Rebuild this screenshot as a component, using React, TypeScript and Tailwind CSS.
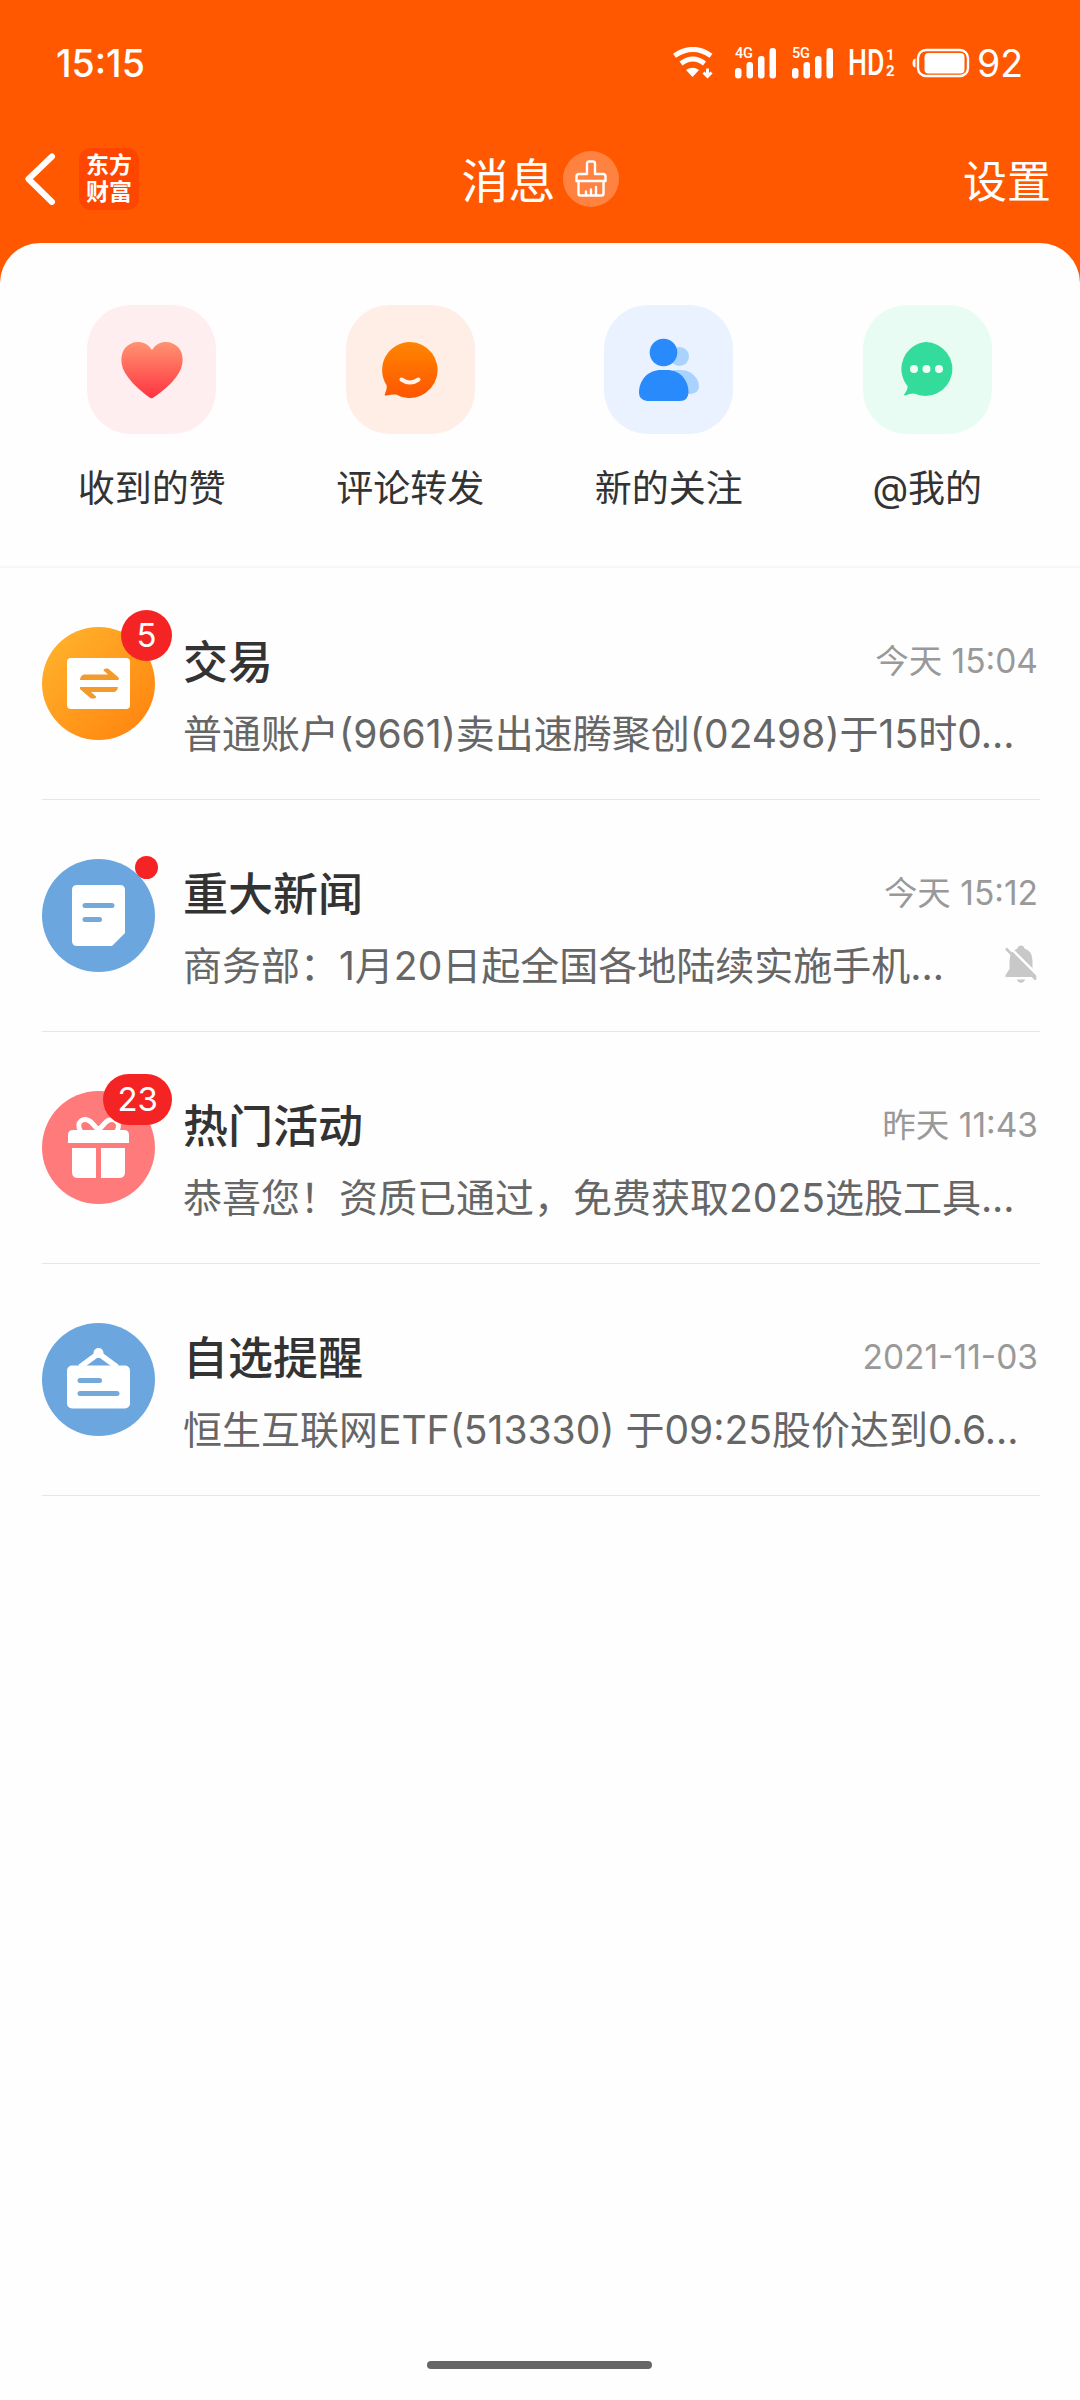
import type { ReactNode } from "react";

const FONT = 'font-[Inter,"Noto_Sans_CJK_SC",sans-serif]';

function Wifi() {
  return (
    <svg className="h-8 w-10" viewBox="0 0 40 32" fill="none">
      <path d="M1.500 8.800Q20 -4 38 8.800" stroke="#fff" strokeWidth="5" />
      <path d="M8 16.500Q20 7.500 31.500 16.500" stroke="#fff" strokeWidth="5" />
      <path d="M13 23Q19.500 18.500 26 23L19.500 30Z" fill="#fff" />
      <path d="M34.500 21.500V28M30.500 25.500L34.500 29.500L38.500 25.500" stroke="#fff" strokeWidth="3" />
    </svg>
  );
}

function Signal({ label }: { label: string }) {
  return (
    <div className="relative h-[31px] w-[42px]">
      <span className="absolute -top-px left-0 font-[Roboto] text-[14.500px] leading-[13px] font-medium text-white">{label}</span>
      <svg className="h-[31px] w-[42px]" viewBox="0 0 42 31" fill="#fff">
        <rect x="0" y="20" width="6.500" height="10.500" rx="3" />
        <rect x="11.500" y="14" width="6.500" height="16.500" rx="3" />
        <rect x="23" y="8" width="6.500" height="22.500" rx="3" />
        <rect x="34.500" y="0" width="6.500" height="30.500" rx="3" />
      </svg>
    </div>
  );
}

function StatusBar() {
  return (
    <div className="flex h-[126px] items-center pr-[57px] pl-[56px]">
      <span className="pt-[2px] text-[37.500px] leading-none font-medium text-white">15:15</span>
      <div className="ml-auto flex items-center">
        <Wifi />
        <div className="ml-[22px]"><Signal label="4G" /></div>
        <div className="ml-[15px]"><Signal label="5G" /></div>
        <span className="ml-[14px] w-[38px] origin-left scale-x-[0.74] font-[Roboto] text-[36px] leading-none font-medium text-white">HD</span>
        <span className="mr-[17px] flex w-[9px] flex-col gap-[3px] font-[Roboto] text-[15px] leading-[13px] font-bold text-white">
          <span>1</span>
          <span>2</span>
        </span>
        <svg className="h-[30px] w-[58px]" viewBox="0 0 58 30" fill="none">
          <path d="M3.500 10.500Q0.500 11 0.500 15T3.500 19.500Z" fill="#fff" />
          <rect x="6" y="2" width="50" height="26" rx="8" stroke="#fff" strokeWidth="2.400" />
          <rect x="12.500" y="5" width="40" height="20.500" rx="4" fill="#fff" />
        </svg>
        <span className="ml-[7px] pt-px text-[37.500px] leading-none text-white">92</span>
      </div>
    </div>
  );
}

function NavBar() {
  return (
    <div className="grid h-[117px] grid-cols-[1fr_auto_1fr] items-start px-[25px]">
      <div className="flex items-start pt-[22px]">
        <svg className="mt-[5px] h-[52px] w-8" viewBox="0 0 32 52" fill="none">
          <path d="M27 3.500L3.500 26L27 49" stroke="#fff" strokeWidth="6" strokeLinecap="round" strokeLinejoin="round" />
        </svg>
        <div className="ml-[22px] flex h-[62px] w-[60px] flex-col items-center justify-center rounded-xl bg-[#ff4600] text-[23px] leading-[27px] font-bold text-white">
          <span>东方</span>
          <span>财富</span>
        </div>
      </div>
      <div className="flex items-center gap-[7px] pt-[25px]">
        <h1 className="relative top-[2px] text-[47px] leading-[56px] text-white">消息</h1>
        <span className="flex size-14 items-center justify-center rounded-full bg-white/25">
          <svg className="h-[38px] w-8" viewBox="0 0 32 38" fill="none" stroke="#fff" strokeWidth="2.400" strokeLinejoin="round" strokeLinecap="round">
            <path d="M12 14V4Q12 1.500 14 1.500H18Q20 1.500 20 4V14H28Q30.500 14 30.500 16.500V21H1.500V16.500Q1.500 14 4 14Z" />
            <path d="M3.500 21V33.500Q3.500 35.500 5.500 35.500H26.500Q28.500 35.500 28.500 33.500V21M11 35V31.500M16 35V29.500M21 35V27" />
          </svg>
        </span>
      </div>
      <span className="justify-self-end pt-[28px] pr-1 text-[44px] leading-[56px] text-white">设置</span>
    </div>
  );
}

const shortcuts: { label: string; tile: string; icon: ReactNode }[] = [
  {
    label: "收到的赞",
    tile: "bg-[#feeef0]",
    icon: (
      <svg className="size-16" viewBox="0 0 64 64">
        <defs>
          <linearGradient id="heart" x1="0" y1="0" x2="0" y2="1">
            <stop offset="0" stopColor="#ff9472" />
            <stop offset="1" stopColor="#ff3340" />
          </linearGradient>
        </defs>
        <path fill="url(#heart)" d="M32 12C26 2 12.500 1.500 5.500 9.500C-1 17.500 0.500 29.500 7.500 38.500C14 47.500 22.500 54.500 30 59.700Q31.500 60.800 33 59.700C41 54.500 50 47.500 56.500 38.500C63.500 29.500 65 17.500 58.500 9.500C51 1.500 38 2 32 12Z" />
      </svg>
    ),
  },
  {
    label: "评论转发",
    tile: "bg-[#feeee6]",
    icon: (
      <svg className="size-16" viewBox="0 0 64 64" fill="none">
        <defs>
          <linearGradient id="smile" x1="0" y1="0" x2="0" y2="1">
            <stop offset="0" stopColor="#ff8500" />
            <stop offset="1" stopColor="#ff5500" />
          </linearGradient>
        </defs>
        <path fill="url(#smile)" d="M32 4A28 28 0 1 1 18 56.500Q14 56 8.500 57.500Q6 58 7 55.500Q9.500 50 8.500 47A28 28 0 0 1 32 4Z" />
        <path d="M23.500 41.500Q32 47.500 40.500 41.500" stroke="#fff3eb" strokeWidth="4" strokeLinecap="round" />
      </svg>
    ),
  },
  {
    label: "新的关注",
    tile: "bg-[#e9f2fe]",
    icon: (
      <svg className="size-16" viewBox="0 0 64 64">
        <g fill="#a9d3fe">
          <circle cx="42.500" cy="18.500" r="9.500" />
          <path d="M36 32H44Q54 32 60 41Q66 54 54 56H40Z" />
        </g>
        <g fill="#298afb">
          <circle cx="26.500" cy="14.500" r="13.800" />
          <path d="M24 32H30C43 32 51.500 42 51.500 54.500Q51 63 43 63H10Q2 62 2 54.500C2 42 11 32 24 32Z" />
        </g>
      </svg>
    ),
  },
  {
    label: "@我的",
    tile: "bg-[#e8fcf3]",
    icon: (
      <svg className="size-16" viewBox="0 0 64 64">
        <path fill="#34dc9c" d="M31 4A27 27 0 1 1 19 55.500Q15 55.500 10 57.500Q8 57.700 9.500 56Q13 51 12.500 48A27 27 0 0 1 31 4Z" />
        <g fill="#effdf7">
          <circle cx="19" cy="31" r="4" />
          <circle cx="31.500" cy="31" r="4" />
          <circle cx="44" cy="31" r="4" />
        </g>
      </svg>
    ),
  },
];

function Shortcuts() {
  return (
    <div className="flex h-[325px] border-b-2 border-[#f7f7f7] pt-[62px] pr-[23.500px] pl-[22.500px]">
      {shortcuts.map((s) => (
        <div key={s.label} className="flex flex-1 flex-col items-center">
          <div className={`flex size-[129px] items-center justify-center rounded-[44px] ${s.tile}`}>{s.icon}</div>
          <span className="mt-[31px] text-[37px] leading-[48px] text-[#333]">{s.label}</span>
        </div>
      ))}
    </div>
  );
}

type Message = {
  title: string;
  text: string;
  time: string;
  badge?: string;
  dot?: boolean;
  muted?: boolean;
  icon: ReactNode;
};

const messages: Message[] = [
  {
    title: "交易",
    text: "普通账户(9661)卖出速腾聚创(02498)于15时0...",
    time: "今天 15:04",
    badge: "5",
    icon: (
      <svg className="size-[113px]" viewBox="0 0 113 113">
        <defs>
          <linearGradient id="trade" x1="0" y1="0" x2="1" y2="1">
            <stop offset="0.100" stopColor="#ffb12b" />
            <stop offset="0.900" stopColor="#ff8610" />
          </linearGradient>
        </defs>
        <circle cx="56.500" cy="56.500" r="56.500" fill="url(#trade)" />
        <rect x="25" y="31" width="63" height="51" rx="4" fill="#fff" />
        <g fill="#f39a2c">
          <path d="M38 53Q38.500 47.500 43 47.500H66L61.500 43.500Q61.500 41 66 41.500L76 50Q77.500 51 76.500 53Z" />
          <path d="M76 60Q75.500 65 71 65H49L54 69.500Q54.500 72 49 71.500L38.500 62.500Q37.500 61 38 60Z" />
        </g>
      </svg>
    ),
  },
  {
    title: "重大新闻",
    text: "商务部：1月20日起全国各地陆续实施手机...",
    time: "今天 15:12",
    dot: true,
    muted: true,
    icon: (
      <svg className="size-[113px]" viewBox="0 0 113 113">
        <circle cx="56.500" cy="56.500" r="56.500" fill="#6ba6df" />
        <path fill="#fff" d="M35 26H78Q83 26 83 31V74L70 87H35Q30 87 30 82V31Q30 26 35 26Z" />
        <path d="M43 46.500H70M43 60.500H57.500" stroke="#74a9d9" strokeWidth="5" strokeLinecap="round" />
      </svg>
    ),
  },
  {
    title: "热门活动",
    text: "恭喜您！资质已通过，免费获取2025选股工具...",
    time: "昨天 11:43",
    badge: "23",
    icon: (
      <svg className="size-[113px]" viewBox="0 0 113 113">
        <circle cx="56.500" cy="56.500" r="56.500" fill="#fe7a7b" />
        <g fill="#fff">
          <path d="M31 39H82Q87 39 87 44V52H26V44Q26 39 31 39Z" />
          <path d="M30 57H54V87H36Q30 87 30 81ZM59 57H83V81Q83 87 77 87H59Z" />
        </g>
        <path d="M38.500 40C33 31 42 25 49 31L56.500 39L64 31C71 25 80 31 75 40" stroke="#fff" strokeWidth="5" fill="none" />
      </svg>
    ),
  },
  {
    title: "自选提醒",
    text: "恒生互联网ETF(513330) 于09:25股价达到0.6...",
    time: "2021-11-03",
    icon: (
      <svg className="size-[113px]" viewBox="0 0 113 113">
        <circle cx="56.500" cy="56.500" r="56.500" fill="#6ba6df" />
        <path d="M38 44L56.500 30.500L75 44" stroke="#fff" strokeWidth="5.500" fill="none" />
        <circle cx="56.500" cy="30" r="5" fill="#fff" />
        <rect x="25" y="42.500" width="63" height="43" rx="5" fill="#fff" />
        <path d="M38 57.500H57.500M38 70.500H75" stroke="#74a9d9" strokeWidth="5" strokeLinecap="round" />
      </svg>
    ),
  },
];

function MutedBell() {
  return (
    <svg className="h-[38px] w-8" viewBox="0 0 32 38">
      <g fill="#c8c8c8">
        <path d="M16 0.500Q19 0.500 19.500 3.500Q27.500 6 27.500 16V24L31.500 31V32H0.500V30L4.500 24V16Q4.500 6 12.500 3.500Q13 0.500 16 0.500Z" />
        <path d="M12 34.500H20Q19 37.800 16 37.800T12 34.500Z" />
      </g>
      <path d="M2.500 0L34.500 32" stroke="#fff" strokeWidth="2.400" />
      <path d="M1 3.500L31 34.500" stroke="#c8c8c8" strokeWidth="2.600" />
    </svg>
  );
}

function MessageRow({ m }: { m: Message }) {
  return (
    <li className="mr-[40px] ml-[42px] flex h-[232px] border-b border-[#e6e6e6]">
      <div className="relative mt-[59px] size-[113px] shrink-0">
        {m.icon}
        {m.badge && (
          <span className="absolute -top-[17px] -right-[17px] flex h-[51px] min-w-[51px] items-center justify-center rounded-full bg-[#f52424] px-[14px] text-[33px] leading-none text-white">
            {m.badge}
          </span>
        )}
        {m.dot && <span className="absolute -top-[3px] -right-[3px] size-[23px] rounded-full bg-[#f52424]" />}
      </div>
      <div className="mt-[65px] ml-7 min-w-0 flex-1 pr-[2px] whitespace-nowrap">
        <div className="flex h-[60px] items-start justify-between">
          <h2 className="text-[45px] leading-[60px] font-medium text-[#333]">{m.title}</h2>
          <time className="text-[33.500px] leading-[56px] text-[#999]">{m.time}</time>
        </div>
        <div className="mt-[13px] flex h-[56px] items-center justify-between">
          <p className="text-[39px] leading-[56px] text-[#666]">{m.text}</p>
          {m.muted && <div className="-mt-1 mr-px"><MutedBell /></div>}
        </div>
      </div>
    </li>
  );
}

export default function App() {
  return (
    <div className={`flex h-[2400px] w-[1080px] flex-col overflow-hidden bg-[#ff5800] ${FONT}`}>
      <StatusBar />
      <NavBar />
      <main className="flex flex-1 flex-col rounded-t-[40px] bg-[#fefefe]">
        <Shortcuts />
        <ul>
          {messages.map((m) => (
            <MessageRow key={m.title} m={m} />
          ))}
        </ul>
        <div className="mt-auto mb-[31px] ml-[427px] h-2 w-[225px] rounded-full bg-[#666]" />
      </main>
    </div>
  );
}
